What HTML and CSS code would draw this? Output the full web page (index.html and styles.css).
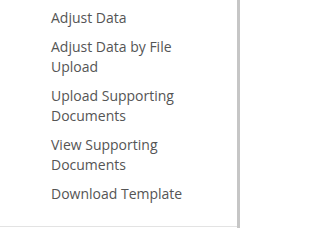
FILE: index.html
```html
<!DOCTYPE html>
<html>
<head>
<meta charset="utf-8">
<link rel="stylesheet" href="styles.css">
</head>
<body>
<div class="frame">
  <div class="menu">
    <ul class="menu-list">
      <li class="menu-item">Adjust Data</li>
      <li class="menu-item">Adjust Data by File Upload</li>
      <li class="menu-item">Upload Supporting Documents</li>
      <li class="menu-item">View Supporting Documents</li>
      <li class="menu-item">Download Template</li>
    </ul>
  </div>
  <div class="edge"></div>
</div>
</body>
</html>
```
FILE: styles.css
```css
html, body {
  margin: 0;
  padding: 0;
  background: #ffffff;
}
.frame {
  display: flex;
  width: 240px;
  height: 228px;
}
.menu {
  width: 237px;
  height: 226px;
  border-bottom: 1px solid #e3e3e3;
  background: #ffffff;
}
.edge {
  width: 3px;
  height: 228px;
  background: #c6c6c6;
}
.menu-list {
  list-style: none;
  margin: 0;
  padding: 4px 20px 0 51px;
  font-family: "Open Sans", "Liberation Sans", sans-serif;
  font-size: 14px;
  line-height: 20px;
  color: #555555;
}
.menu-item {
  padding: 4px 0 5px;
}
```
